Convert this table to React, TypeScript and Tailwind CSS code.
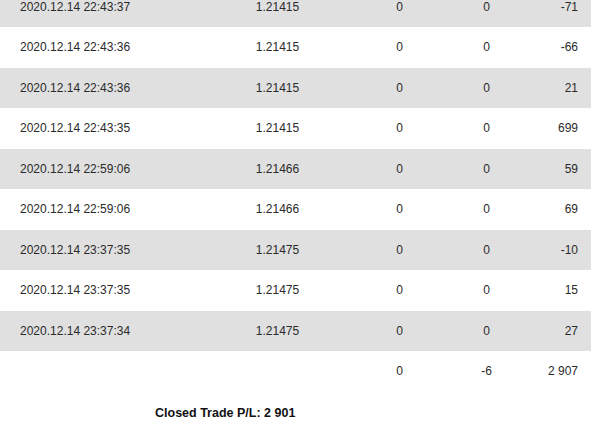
const rows = [
  ["2020.12.14 22:43:37", "1.21415", "0", "0", "-71"],
  ["2020.12.14 22:43:36", "1.21415", "0", "0", "-66"],
  ["2020.12.14 22:43:36", "1.21415", "0", "0", "21"],
  ["2020.12.14 22:43:35", "1.21415", "0", "0", "699"],
  ["2020.12.14 22:59:06", "1.21466", "0", "0", "59"],
  ["2020.12.14 22:59:06", "1.21466", "0", "0", "69"],
  ["2020.12.14 23:37:35", "1.21475", "0", "0", "-10"],
  ["2020.12.14 23:37:35", "1.21475", "0", "0", "15"],
  ["2020.12.14 23:37:34", "1.21475", "0", "0", "27"],
];

function Row({ cells, shaded }: { cells: string[]; shaded: boolean }) {
  return (
    <div
      className={`grid grid-cols-[200px_155px_89px_85px_62px] items-center h-[40.5px] ${
        shaded ? "bg-[#e0e0e0]" : "bg-white"
      }`}
    >
      <div className="pl-[20px]">{cells[0]}</div>
      <div className="text-center">{cells[1]}</div>
      <div className="text-center">{cells[2]}</div>
      <div className="text-center">{cells[3]}</div>
      <div className="text-right pr-[13px]">{cells[4]}</div>
    </div>
  );
}

export default function App() {
  return (
    <div className="w-[600px] h-[430px] overflow-hidden bg-white text-[12px] text-[#2a2a2a] font-['Liberation_Sans',Arial,sans-serif]">
      <div className="w-[591px] -mt-[13.5px]">
        {rows.map((r, idx) => (
          <Row key={`row-${idx}`} cells={r} shaded={idx % 2 === 0} />
        ))}
        {/* totals */}
        <Row cells={["", "", "0", "-6", "2 907"]} shaded={false} />
      </div>
      <div className="pl-[155px] pt-[12px] font-bold text-[12.5px] text-[#111]">Closed Trade P/L: 2 901</div>
    </div>
  );
}
